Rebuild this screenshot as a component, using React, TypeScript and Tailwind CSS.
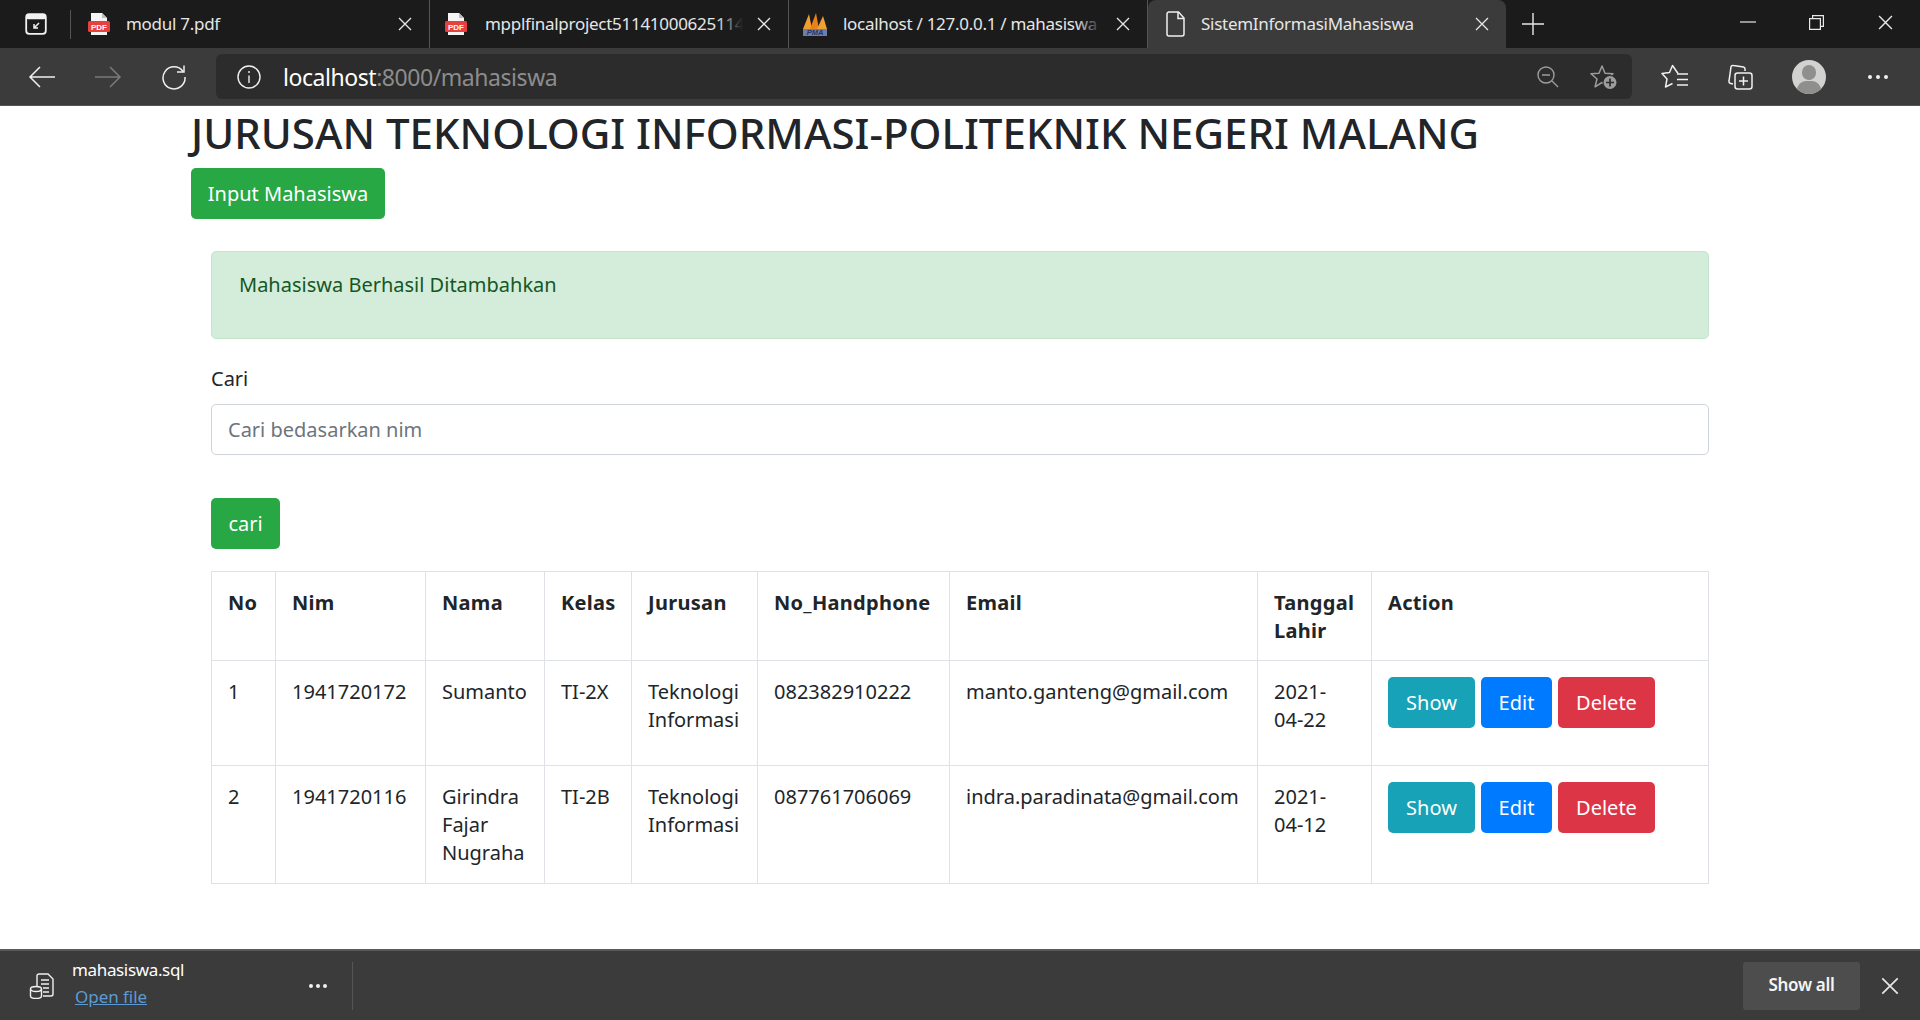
import React from "react";

const F = "font-['Noto_Sans','Open_Sans',sans-serif]";

function CloseX({ size = 14, color = "#e8e8e8" }: { size?: number; color?: string }) {
  return (
    <svg width={size} height={size} viewBox="0 0 14 14" fill="none" stroke={color} strokeWidth="1.3" className="shrink-0">
      <path d="M1 1l12 12M13 1L1 13" />
    </svg>
  );
}

function PdfIcon() {
  return (
    <svg width="24" height="24" viewBox="0 0 24 24" className="shrink-0">
      <path d="M4 1h11l5 5v17H4z" fill="#f4f4f4" />
      <path d="M15 1l5 5h-5z" fill="#bdbdbd" />
      <rect x="1" y="9" width="22" height="11" rx="1.5" fill="#e8403f" />
      <text x="12" y="17.6" fontSize="8" fontWeight="700" textAnchor="middle" fill="#fff" fontFamily="Liberation Sans">PDF</text>
    </svg>
  );
}

function PmaIcon() {
  return (
    <svg width="26" height="26" viewBox="0 0 26 26" className="shrink-0">
      <path d="M1 18L7 3l3 15z" fill="#f0a030" />
      <path d="M8 18l6-16 3 16z" fill="#e8801c" />
      <path d="M15 18l6-13 4 13z" fill="#f0a030" />
      <rect x="1" y="18" width="24" height="7" fill="#6a7fb0" />
      <text x="13" y="24.4" fontSize="7.5" fontWeight="700" fontStyle="italic" textAnchor="middle" fill="#29365f" fontFamily="Liberation Sans">PMA</text>
    </svg>
  );
}

function Tab({ icon, title, fade, width, active, pad, box }: { icon: React.ReactNode; title: string; fade?: boolean; width: string; active?: boolean; pad: string; box: string }) {
  return (
    <div className={`${width} ${pad} h-full flex items-center shrink-0 pr-[17px] ${active ? "bg-[#3b3b3b] rounded-t-[8px]" : "border-r border-[#555555]"}`}>
      <div className={`${box} shrink-0`}>{icon}</div>
      <div className="flex-1 min-w-0 overflow-hidden whitespace-nowrap relative text-[17px] tracking-[-0.28px] text-[#e6e6e6]">
        {title}
        {fade && <div className="absolute right-0 top-0 bottom-0 w-[26px] bg-gradient-to-r from-transparent to-[#1b1b1b]" />}
      </div>
      <div className="ml-[14px]"><CloseX /></div>
    </div>
  );
}

function Btn({ children, color, w }: { children: React.ReactNode; color: string; w: string }) {
  return (
    <button className={`${color} ${w} h-[51px] rounded-[5px] text-white text-[20px] shrink-0 flex items-center justify-center`}>
      {children}
    </button>
  );
}

const th = "border border-[#dee2e6] align-top px-[16px] pt-[17px] pb-[15px] text-left font-bold text-[#212529] leading-[28px] tracking-[0.3px]";
const td = "border border-[#dee2e6] align-top px-[16px] pt-[17px] pb-[16px] text-[#212529] leading-[28px]";

const rows = [
  { no: "1", nim: "1941720172", nama: ["Sumanto"], kelas: "TI-2X", hp: "082382910222", email: "manto.ganteng@gmail.com", tgl: ["2021-", "04-22"], h: "h-[105px]" },
  { no: "2", nim: "1941720116", nama: ["Girindra", "Fajar", "Nugraha"], kelas: "TI-2B", hp: "087761706069", email: "indra.paradinata@gmail.com", tgl: ["2021-", "04-12"], h: "h-[116px]" },
];

export default function App() {
  return (
    <div className={`${F} w-full h-[1020px] flex flex-col overflow-hidden bg-white`}>
      {/* tab strip */}
      <div className="h-[48px] bg-[#1b1b1b] flex items-center shrink-0">
        <div className="w-[71px] h-full flex items-center shrink-0 pl-[25px] relative">
          <svg width="22" height="22" viewBox="0 0 22 22" fill="none">
            <rect x="1.2" y="1.2" width="19.6" height="19.6" rx="3" stroke="#f2f2f2" strokeWidth="1.8" />
            <rect x="1.2" y="1.2" width="19.6" height="5" rx="2" fill="#f2f2f2" />
            <path d="M14 10l-5 5M9 11v4h4" stroke="#f2f2f2" strokeWidth="1.5" />
          </svg>
          <div className="absolute right-0 top-[10px] bottom-[9px] w-px bg-[#555555]" />
        </div>
        <Tab icon={<PdfIcon />} title="modul 7.pdf" width="w-[359px]" pad="pl-[16px]" box="w-[39px]" />
        <Tab icon={<PdfIcon />} title="mpplfinalproject5114100062511412" fade width="w-[359px]" pad="pl-[14px]" box="w-[41px]" />
        <Tab icon={<PmaIcon />} title="localhost / 127.0.0.1 / mahasiswa" fade width="w-[359px]" pad="pl-[13px]" box="w-[41px]" />
        <Tab icon={
          <svg width="20" height="26" viewBox="0 0 20 26" fill="none" stroke="#f0f0f0" strokeWidth="1.5">
            <path d="M2.5 1h10l5.5 6v16a2 2 0 0 1-2 2H3a2 2 0 0 1-2-2V3a2 2 0 0 1 1.5-2z" />
            <path d="M12 1v6.5h6" />
          </svg>
        } title="SistemInformasiMahasiswa" width="w-[358px]" pad="pl-[18px]" box="w-[35px]" active />
        <div className="ml-[16px] pb-[1px]">
          <svg width="22" height="22" viewBox="0 0 22 22" stroke="#e8e8e8" strokeWidth="1.4"><path d="M11 0v22M0 11h22" /></svg>
        </div>
        <div className="ml-auto flex items-center pb-[4px] pr-[27px]">
          <svg width="16" height="16" viewBox="0 0 16 16" stroke="#e8e8e8" strokeWidth="1.2"><path d="M0 8h16" /></svg>
          <svg className="ml-[53px]" width="15" height="15" viewBox="0 0 15 15" fill="none" stroke="#e8e8e8" strokeWidth="1.2"><path d="M.6 3.6h10.8v10.8H.6zM3.6 3.6V.6h10.8v10.8h-3" /></svg>
          <div className="ml-[54px]"><CloseX size={15} /></div>
        </div>
      </div>

      {/* toolbar */}
      <div className="h-[58px] bg-[#3b3b3b] border-b border-[#555555] flex items-center shrink-0 pl-[28px]">
        <svg width="28" height="24" viewBox="0 0 28 24" fill="none" stroke="#f0f0f0" strokeWidth="1.5"><path d="M27 12H2M12 2L2 12l10 10" /></svg>
        <svg className="ml-[38px]" width="28" height="24" viewBox="0 0 28 24" fill="none" stroke="#7a7a7a" strokeWidth="1.5"><path d="M1 12h25M16 2l10 10-10 10" /></svg>
        <svg className="ml-[39px]" width="26" height="26" viewBox="0 0 26 26" fill="none" stroke="#f0f0f0" strokeWidth="1.5"><path d="M22 7.5A11 11 0 1 0 24 13" /><path d="M23 1.5v6.5h-7" /></svg>
        <div className="ml-[29px] w-[1416px] h-[45px] bg-[#2c2c2c] rounded-[6px] flex items-center pl-[21px] shrink-0">
          <svg width="24" height="24" viewBox="0 0 24 24" fill="none" stroke="#f0f0f0" strokeWidth="1.4"><circle cx="12" cy="12" r="11" /><path d="M12 10.5V18M12 6v2" /></svg>
          <span className="ml-[22px] pt-[1px] text-[23px] tracking-[-0.45px] text-white">localhost<span className="text-[#8c8c8c]">:8000/mahasiswa</span></span>
          <div className="ml-auto flex items-center pr-[14px]">
            <svg width="22" height="22" viewBox="0 0 22 22" fill="none" stroke="#9c9c9c" strokeWidth="1.4"><circle cx="9" cy="9" r="8" /><path d="M5 9h8M15 15l6 6" /></svg>
            <svg className="ml-[31px]" width="28" height="26" viewBox="0 0 28 26" fill="none">
              <path d="M12 2l3 7.2 8 .6-6 5.200 1.900 7.800L12 18.500l-6.900 4.300L7 15 1 9.800l8-.6z" stroke="#9c9c9c" strokeWidth="1.500" strokeLinejoin="round" />
              <circle cx="20" cy="18.500" r="7.500" fill="#2c2c2c" />
              <circle cx="20" cy="18.500" r="6.500" fill="#9c9c9c" />
              <path d="M20 14.500v8M16 18.500h8" stroke="#2c2c2c" strokeWidth="1.700" />
            </svg>
          </div>
        </div>
        <svg className="ml-[29px]" width="28" height="26" viewBox="0 0 28 26" fill="none" stroke="#f0f0f0" strokeWidth="1.5" strokeLinejoin="round">
          <path d="M17 9.500L11.500 1.500 8.500 8.500 1 9.500 6 15l-1.500 8 7-3.500" />
          <path d="M16 10h11M16 15.500h11M16 21h11" />
        </svg>
        <svg className="ml-[37px]" width="28" height="28" viewBox="0 0 28 28" fill="none" stroke="#f0f0f0" strokeWidth="1.5">
          <path d="M7 21l-2-.500a2 2 0 0 1-2-2.500L5 4a2 2 0 0 1 2.500-1.500l10 1.500a2 2 0 0 1 1.500 2v2" />
          <rect x="9" y="10" width="17" height="16" rx="2.500" />
          <path d="M17.500 13.500v9M13 18h9" />
        </svg>
        <div className="ml-[38px] w-[34px] h-[34px] rounded-full bg-[#d2d2d0] relative overflow-hidden shrink-0">
          <div className="absolute left-[10px] top-[5px] w-[14px] h-[15px] rounded-full bg-[#8f8f8d]" />
          <div className="absolute left-[5px] top-[21px] w-[24px] h-[18px] rounded-full bg-[#8f8f8d]" />
        </div>
        <div className="ml-[42px] flex gap-[4px]">
          <div className="w-[4px] h-[4px] rounded-full bg-[#f0f0f0]" />
          <div className="w-[4px] h-[4px] rounded-full bg-[#f0f0f0]" />
          <div className="w-[4px] h-[4px] rounded-full bg-[#f0f0f0]" />
        </div>
      </div>

      {/* page */}
      <div className="flex-1 min-h-0 text-[20px] text-[#212529]">
        <div className="pl-[191px] pt-[3px]">
          <h1 className="text-[42px] font-medium leading-[47px] tracking-[0.02px] whitespace-nowrap">JURUSAN TEKNOLOGI INFORMASI-POLITEKNIK NEGERI MALANG</h1>
          <button className="mt-[12px] w-[194px] h-[51px] rounded-[5px] bg-[#28a745] text-white text-[20px] flex items-center justify-center">Input Mahasiswa</button>
        </div>
        <div className="ml-[211px] w-[1498px] mt-[32px]">
          <div className="h-[88px] bg-[#d4edda] border border-[#c3e6cb] rounded-[5px] pl-[27px] pt-[19px] text-[#155724] leading-[28px]">Mahasiswa Berhasil Ditambahkan</div>
          <div className="mt-[26px] leading-[28px]">Cari</div>
          <input readOnly placeholder="Cari bedasarkan nim" className="block mt-[11px] w-full h-[51px] border border-[#ced4da] rounded-[5px] px-[16px] outline-none placeholder:text-[#6c757d]" />
          <button className="mt-[43px] w-[69px] h-[51px] rounded-[5px] bg-[#28a745] text-white text-[20px] flex items-center justify-center">cari</button>
          <table className="mt-[22px] w-[1497px] table-fixed border-collapse">
            <colgroup>
              <col className="w-[64px]" />
              <col className="w-[150px]" />
              <col className="w-[119px]" />
              <col className="w-[87px]" />
              <col className="w-[126px]" />
              <col className="w-[192px]" />
              <col className="w-[308px]" />
              <col className="w-[114px]" />
              <col className="w-[337px]" />
            </colgroup>
            <thead>
              <tr className="h-[89px]">
                {["No", "Nim", "Nama", "Kelas", "Jurusan", "No_Handphone", "Email"].map((t) => (
                  <th key={t} className={th}>{t}</th>
                ))}
                <th className={th}>Tanggal<br />Lahir</th>
                <th className={th}>Action</th>
              </tr>
            </thead>
            <tbody>
              {rows.map((r) => (
                <tr key={r.no} className={r.h}>
                  <td className={td}>{r.no}</td>
                  <td className={td}>{r.nim}</td>
                  <td className={td}>{r.nama.map((n) => <div key={n}>{n}</div>)}</td>
                  <td className={td}>{r.kelas}</td>
                  <td className={td}><div>Teknologi</div><div>Informasi</div></td>
                  <td className={td}>{r.hp}</td>
                  <td className={td}>{r.email}</td>
                  <td className={td}>{r.tgl.map((n) => <div key={n}>{n}</div>)}</td>
                  <td className="border border-[#dee2e6] align-top pl-[16px] pt-[16px]">
                    <div className="flex gap-[6px]">
                      <Btn color="bg-[#17a2b8]" w="w-[87px]">Show</Btn>
                      <Btn color="bg-[#007bff]" w="w-[71px]">Edit</Btn>
                      <Btn color="bg-[#dc3545]" w="w-[97px]">Delete</Btn>
                    </div>
                  </td>
                </tr>
              ))}
            </tbody>
          </table>
        </div>
      </div>

      {/* download bar */}
      <div className="h-[71px] bg-[#3b3b3b] border-t-2 border-[#5a5a5a] flex items-center shrink-0 text-white">
        <svg className="ml-[29px] shrink-0" width="26" height="26" viewBox="0 0 26 26" fill="none" stroke="#f0f0f0" strokeWidth="1.400">
          <path d="M8 13V3a2 2 0 0 1 2-2h9l5 5v15a2 2 0 0 1-2 2H14" />
          <path d="M12 7h8M12 11h8M14 15h6M14 19h6" />
          <ellipse cx="7" cy="16" rx="5.500" ry="2.500" fill="#3b3b3b" />
          <path d="M1.500 16v7c0 1.500 2.500 2.500 5.500 2.500s5.500-1 5.500-2.500v-7" />
        </svg>
        <div className="ml-[17px] w-[230px] shrink-0 pb-[5px]">
          <div className="text-[17px] tracking-[-0.35px] leading-[24px] text-white">mahasiswa.sql</div>
          <div className="mt-[3px] ml-[3px] text-[17px] tracking-[-0.05px] leading-[24px] text-[#5a9bd5] underline">Open file</div>
        </div>
        <div className="ml-[7px] flex gap-[3px]">
          <div className="w-[4px] h-[4px] rounded-full bg-[#f0f0f0]" />
          <div className="w-[4px] h-[4px] rounded-full bg-[#f0f0f0]" />
          <div className="w-[4px] h-[4px] rounded-full bg-[#f0f0f0]" />
        </div>
        <div className="ml-[25px] w-px h-[48px] bg-[#555555]" />
        <div className="ml-auto w-[117px] h-[48px] bg-[#4d4d4d] rounded-[3px] flex items-center justify-center pb-[1px] text-[17px] font-semibold tracking-[-0.3px] text-[#f4f4f4]">Show all</div>
        <div className="ml-[21px] mr-[21px]"><CloseX size={18} /></div>
      </div>
    </div>
  );
}
